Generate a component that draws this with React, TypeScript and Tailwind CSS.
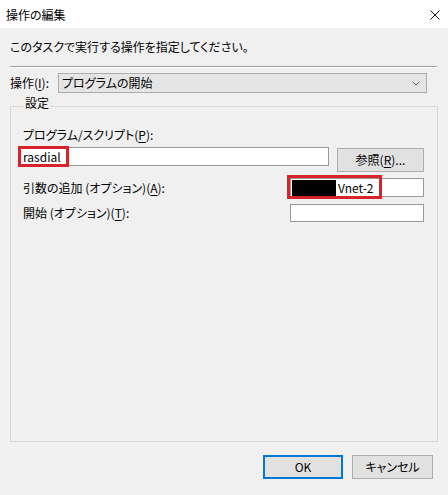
import React from "react";

const font = {
  fontFamily: '"Noto Sans CJK JP", "Noto Sans", sans-serif',
};

const Mn: React.FC<{ k: string }> = ({ k }) => <span className="underline underline-offset-2">{k}</span>;

const App: React.FC = () => {
  return (
    <div
      className="flex h-[495px] w-[448px] flex-col bg-[#f0f0f0] text-[12px] leading-[16px] text-black [font-feature-settings:'palt']"
      style={font}
    >
      {/* title bar */}
      <div className="flex h-[28px] items-center justify-between bg-white pl-[6px] pr-[8px] pt-[2px]">
        <span>操作の編集</span>
        <svg width="10" height="10" viewBox="0 0 10 10">
          <path d="M0.5 0.5 L9.5 9.5 M9.5 0.5 L0.5 9.5" stroke="#111" strokeWidth="1" />
        </svg>
      </div>

      <div className="flex flex-col px-[10px]">
        <p className="mt-[11px]">このタスクで実行する操作を指定してください。</p>
        <div className="mt-[11px] w-[427px] border-t border-b border-t-[#a0a0a0] border-b-white" />

        <div className="mt-[5px] flex h-[20px] items-center">
          <span className="w-[48px]">
            操作(<Mn k="I" />):
          </span>
          <div className="flex h-[20px] w-[369px] items-center justify-between border border-[#adadad] bg-[#e5e5e5] pl-[3px] pr-[6px]">
            <span>プログラムの開始</span>
            <svg width="8" height="5" viewBox="0 0 8 5">
              <path d="M0.5 0.5 L4 4 L7.5 0.5" fill="none" stroke="#606060" strokeWidth="1" />
            </svg>
          </div>
        </div>

        <fieldset className="mt-[2px] flex h-[347px] w-[428px] flex-col border border-[#d9d9d9] pl-[7px] pr-[13px]">
          <legend className="ml-[5px] px-[2px] pb-[6px]">設定</legend>

          <span className="mt-[10px] pl-[5px]">
            プログラム/スクリプト(<Mn k="P" />):
          </span>
          <div className="mt-[4px] flex items-start">
            <div className="relative flex h-[19px] w-[311px] items-center border border-[#999] bg-white pl-[4px]">
              <span>rasdial</span>
              <div className="absolute left-[-1px] top-[-2px] h-[21px] w-[51px] border-[3px] border-[#d8232a]" />
            </div>
            <button className="ml-[8px] mt-[1px] h-[24px] w-[87px] border border-[#adadad] bg-[#e1e1e1]">
              参照(<Mn k="R" />)...
            </button>
          </div>

          <div className="mt-[6px] flex items-center justify-between">
            <span className="pl-[5px]">
              引数の追加 (オプション)(<Mn k="A" />):
            </span>
            <div className="relative flex h-[19px] w-[134px] items-center border border-[#999] bg-white pl-[1px]">
              <span className="h-[16px] w-[44px] bg-black" />
              <span className="ml-[2px]">Vnet-2</span>
              <div className="absolute left-[-4px] top-[-4px] h-[24px] w-[95px] border-[3px] border-[#d8232a]" />
            </div>
          </div>

          <div className="mt-[7px] flex items-center justify-between">
            <span className="pl-[5px]">
              開始 (オプション)(<Mn k="T" />):
            </span>
            <div className="h-[18px] w-[134px] border border-[#999] bg-white" />
          </div>
        </fieldset>

        <div className="mr-[5px] mt-[13px] flex justify-end gap-[9px]">
          <button className="h-[24px] w-[80px] border-2 border-[#0078d7] bg-[#e1e1e1]">OK</button>
          <button className="h-[24px] w-[81px] border border-[#adadad] bg-[#e1e1e1]">キャンセル</button>
        </div>
      </div>
    </div>
  );
};

export default App;
